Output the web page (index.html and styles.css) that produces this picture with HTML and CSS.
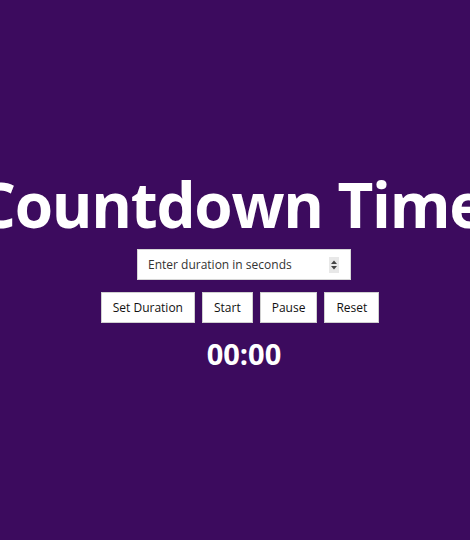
FILE: index.html
```html
<!DOCTYPE html>
<html lang="en">
<head>
<meta charset="utf-8">
<title>Countdown Timer</title>
<link rel="stylesheet" href="styles.css">
</head>
<body>
<main class="timer-app">
  <h1 class="title">Countdown Timer</h1>
  <div class="duration-field">
    <input class="duration-input" type="text" placeholder="Enter duration in seconds">
    <span class="spinner">
      <svg width="8" height="12" viewBox="0 0 8 12"><path d="M4 1.5 L7 5 L1 5 Z" fill="#444"/><path d="M1 7 L7 7 L4 10.5 Z" fill="#444"/></svg>
    </span>
  </div>
  <div class="controls">
    <button class="btn">Set Duration</button>
    <button class="btn">Start</button>
    <button class="btn">Pause</button>
    <button class="btn">Reset</button>
  </div>
  <div class="display">00:00</div>
</main>
</body>
</html>
```

FILE: styles.css
```css
html, body {
  margin: 0;
  height: 100%;
}
body {
  background: #3c0b5e;
  font-family: "Open Sans", "Noto Sans", sans-serif;
  overflow: hidden;
  padding-left: 18px;
  box-sizing: border-box;
}
.timer-app {
  height: 100%;
  display: flex;
  flex-direction: column;
  align-items: center;
  justify-content: center;
}
.title {
  margin: 0;
  color: #ffffff;
  font-size: 62px;
  font-weight: 700;
  line-height: 74px;
  letter-spacing: -1.3px;
  white-space: nowrap;
}
.duration-field {
  margin-top: 8px;
  width: 214px;
  height: 31px;
  box-sizing: border-box;
  background: #ffffff;
  border: 1px solid #d6d6d6;
  display: flex;
  align-items: center;
  padding: 0 11px 0 10px;
}
.duration-input {
  flex: 1;
  min-width: 0;
  border: 0;
  outline: 0;
  padding: 0;
  font-family: inherit;
  font-size: 12px;
  color: #222;
  background: transparent;
}
.duration-input::placeholder {
  color: #333;
}
.spinner {
  width: 10px;
  height: 16px;
  background: #e8e8e8;
  display: flex;
  align-items: center;
  justify-content: center;
}
.controls {
  margin-top: 12px;
  margin-right: 8px;
  display: flex;
  gap: 7px;
}
.btn {
  height: 31px;
  padding: 0 11px;
  background: #ffffff;
  border: 1px solid #d0d0d0;
  font-family: inherit;
  font-size: 12px;
  color: #111;
}
.display {
  margin-top: 11px;
  color: #ffffff;
  font-size: 29px;
  font-weight: 700;
  line-height: 39px;
}
```
